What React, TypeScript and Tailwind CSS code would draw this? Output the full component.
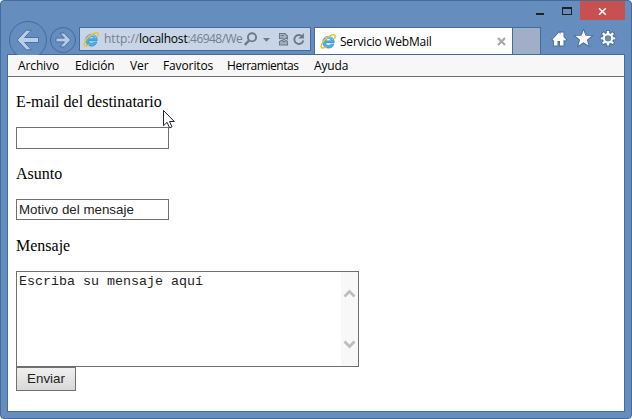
import React from "react";

function IELogo() {
  return (
    <svg width="17" height="17" viewBox="0 0 17 17" className="shrink-0">
      <path
        d="M14.2 9.9H5.7c.2 1.5 1.3 2.4 2.8 2.4 1.2 0 2-.4 2.4-1.1h3c-.7 2.4-2.8 4-5.5 4-3.4 0-5.8-2.5-5.8-5.9s2.4-6 5.9-6 5.8 2.5 5.8 5.8zM5.8 7.8h5.3C10.9 6.5 9.9 5.6 8.5 5.6S6.1 6.5 5.8 7.8z"
        fill="#45b1e8"
        stroke="#2b83bd"
        strokeWidth=".5"
        fillRule="evenodd"
      />
      <path d="M3.8 7.3C4.5 5.2 6.2 4 8.5 4c2.2 0 3.9 1.2 4.4 3" fill="none" stroke="#8edaf8" strokeWidth=".9" />
      <path
        d="M14.8 5.2c.7-2 .5-3.3-.8-3.5-1.6-.3-4.3.9-7.2 3.3C3.300 7.900.900 11.600 1.200 13.800c.3 1.700 2.200 1.600 4.500.4"
        fill="none"
        stroke="#f5c026"
        strokeWidth="1.5"
        strokeLinecap="round"
      />
    </svg>
  );
}

function WindowControls() {
  return (
    <div className="ml-auto flex h-[19px] w-[96px] shrink-0">
      <svg width="51" height="19" viewBox="0 0 51 19" shapeRendering="crispEdges">
        <rect x="7" y="12" width="8" height="2" fill="#202020" />
        <path d="M33 6h10v8H33zM34 8v5h8V8z" fill="#202020" fillRule="evenodd" />
      </svg>
      <div className="flex w-[45px] items-center justify-center bg-[#c75050]">
        <svg width="9" height="9" viewBox="0 0 9 9" className="mt-[2px]">
          <path d="m1 1.200 6.800 6.600M7.800 1.200 1 7.800" stroke="white" strokeWidth="1.5" />
        </svg>
      </div>
    </div>
  );
}

function NavButtons() {
  return (
    <svg width="72" height="35" viewBox="7 19 72 35" className="shrink-0">
      <circle cx="28" cy="39" r="18.5" fill="#658dbe" stroke="#456b98" />
      <circle cx="63" cy="39" r="12.5" fill="#658dbe" stroke="#456b98" />
      <path d="m17 39 9.400-9.800h5L24.600 36.500H38.500v5H24.600l6.800 7.300h-5z" fill="#b9cfe9" stroke="#456b98" strokeWidth=".9" />
      <path d="m70.700 39-6.700-6.900h-4.200l4.600 5H56v3.800h8.400l-4.600 5H64z" fill="#b5cbe6" stroke="#456b98" strokeWidth=".9" />
    </svg>
  );
}

function AddressBar() {
  return (
    <div className="mt-[7px] flex h-6 w-[232px] shrink-0 items-center border border-[#456b98] bg-[#c7d5e7] pl-[3px]">
      <IELogo />
      <div className="ml-1 flex w-[136px] whitespace-nowrap text-[12px] text-[#75808d]">
        <span className="w-[35px]">http://</span>
        <span className="w-[49px] tracking-[-0.2px] text-black">localhost</span>
        <span className="tracking-[-0.55px]">:46948/We</span>
      </div>
      <svg width="70" height="22" viewBox="240 28 70 22" fill="none" stroke="#6d7987">
        <circle cx="252" cy="37.3" r="4.1" strokeWidth="1.9" />
        <path d="m249 40.5-4.2 4.3" strokeWidth="2.4" />
        <path d="M263 38h7l-3.500 3.800z" fill="#6d7987" stroke="none" />
        <path d="M279.500 38.500v-5h5.500l2.500 2.500v3l-1.500-1-2 1.800-2-1.800zM279.500 45v-3.500l2.500-1.300 2 1.800 2-1.600 1.500 1.100V45z" fill="#a6b1be" strokeWidth="1.100" />
        <path d="M281 35.500h3" strokeWidth="1" />
        <path d="M302 36.300a4.500 4.500 0 1 0 1.300 4" strokeWidth="1.900" />
        <path d="M303.900 33v5.500h-5.500z" fill="#6d7987" stroke="none" />
      </svg>
    </div>
  );
}

function ToolIcons() {
  return (
    <svg width="74" height="34" viewBox="549 20 74 34" className="ml-2 shrink-0">
      <path d="M552.500 39.500 559 32.500l1.500 1.500V32.500h3v4.500l2.500 2.500-1 1.200-1.500-1v5.800h-3.500V41h-2.500v4.500H554v-5.800l-.5 1z" fill="white" stroke="#496f9d" strokeWidth="1.8" paintOrder="stroke" />
      <path d="m583.500 30.500 2.100 5.300 5.900.2-4.600 3.700 1.600 5.700-5-3.200-5 3.200 1.600-5.700-4.600-3.700 5.900-.2z" fill="white" stroke="#496f9d" strokeWidth="1.8" paintOrder="stroke" />
      <g fill="none">
        <g stroke="#496f9d">
          <circle cx="608" cy="38.3" r="4.4" strokeWidth="4.2" />
          <path d="M608 30.200v16.200M599.900 38.300h16.200M602.200 32.500l11.600 11.600M613.800 32.500l-11.600 11.600" strokeWidth="4" />
        </g>
        <path d="M608 31v3M608 42.600v3M600.700 38.300h3M612.300 38.300h3M602.800 33.100l2.200 2.200M611 41.300l2.200 2.200M613.200 33.100l-2.200 2.200M605 41.300l-2.200 2.200" stroke="white" strokeWidth="2.3" />
        <circle cx="608" cy="38.3" r="3" fill="#658dbe" />
        <circle cx="608" cy="38.3" r="4.2" stroke="white" strokeWidth="2.1" />
      </g>
    </svg>
  );
}

const menus = [
  { label: "Archivo", style: "w-[57px]" },
  { label: "Edición", style: "w-[55px]" },
  { label: "Ver", style: "w-[33px]" },
  { label: "Favoritos", style: "w-[64px]" },
  { label: "Herramientas", style: "w-[87px] tracking-[-0.45px]" },
  { label: "Ayuda", style: "w-[50px]" },
];

function Field({ label, children }: { label: string; children: React.ReactNode }) {
  return (
    <>
      <label className="mb-4 block h-[18px] text-[16px] leading-[18px]">{label}</label>
      {children}
    </>
  );
}

function MailForm() {
  return (
    <form className="relative flex h-[334px] flex-col items-start bg-white pl-2 pt-4 font-['Liberation_Serif',serif] text-black">
      <Field label="E-mail del destinatario">
        <input className="mb-4 h-[22px] w-[153px] border border-[#707070] bg-white" />
      </Field>
      <Field label="Asunto">
        <input
          defaultValue="Motivo del mensaje"
          className="mb-[17px] h-[21px] w-[153px] border border-[#707070] bg-white px-[2px] font-['Liberation_Sans',sans-serif] text-[13.33px] text-[#222]"
        />
      </Field>
      <Field label="Mensaje">
        <div className="flex h-24 w-[343px] border border-[#707070]">
          <textarea
            defaultValue="Escriba su mensaje aquí"
            className="h-full w-[324px] resize-none px-[2px] pt-[2px] font-['Liberation_Mono',monospace] text-[13.33px] leading-[15px] text-[#222]"
          />
          <svg width="17" height="94" viewBox="341 272 17 94">
            <path d="M341 272h17v94h-17z" fill="#f8f8f8" />
            <path d="m344.500 296.500 5-5 5 5M344.500 341.500l5 5 5-5" fill="none" stroke="#bdbdbd" strokeWidth="2.7" />
          </svg>
        </div>
      </Field>
      <button
        type="button"
        className="h-6 w-[60px] border border-[#707070] bg-linear-to-b from-[#f0f0f0] to-[#d8d8d8] font-['Liberation_Sans',sans-serif] text-[13.33px] text-[#222]"
      >
        Enviar
      </button>
      <svg width="14" height="20" viewBox="0 0 14 20" className="pointer-events-none absolute left-[155px] top-[32px]">
        <path d="M.5 1.500v15.200l3.600-3.400 2.500 5.600 2.400-1.100-2.500-5.300h4.800z" fill="white" stroke="#242432" />
      </svg>
    </form>
  );
}

export default function App() {
  return (
    <div className="h-[419px] w-[632px] overflow-hidden rounded-[4px] border border-[#456b98] bg-[#658dbe] font-['Open_Sans','Noto_Sans',sans-serif]">
      <div className="flex h-[19px] pr-[6px]">
        <WindowControls />
      </div>
      <div className="flex h-[34px] pl-[6px]">
        <NavButtons />
        <AddressBar />
        <div className="ml-[3px] mt-[7px] flex h-[27px] w-[199px] shrink-0 items-center border border-b-0 border-[#456b98] bg-white pl-[5px] pr-[6px] text-[12px] tracking-[-0.22px] text-black">
          <IELogo />
          <span className="ml-[3px] mt-[2px] whitespace-nowrap">Servicio WebMail</span>
          <svg width="9" height="9" viewBox="0 0 9 9" className="ml-auto">
            <path d="m1 1 7 7m0-7L1 8" stroke="#a8a8a8" strokeWidth="2.2" />
          </svg>
        </div>
        <div className="mt-[7px] h-[27px] w-7 shrink-0 border border-b-0 border-l-0 border-[#456b98] bg-[#9fafc8]" />
        <ToolIcons />
      </div>
      <div className="ml-[6px] h-[358px] w-[618px] border border-[#456b98]">
        <nav className="flex h-[22px] items-center border-b border-[#707070] bg-[#f7f7f7] pl-[10px] text-[12px] tracking-[-0.12px] text-black">
          {menus.map((menu) => (
            <span key={menu.label} className={menu.style}>{menu.label}</span>
          ))}
        </nav>
        <MailForm />
      </div>
    </div>
  );
}
